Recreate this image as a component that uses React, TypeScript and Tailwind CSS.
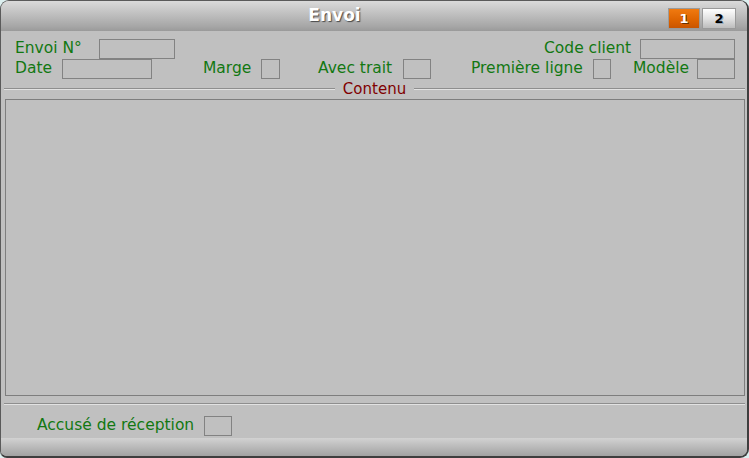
const font = { fontFamily: '"DejaVu Sans", Verdana, sans-serif' }

function Field({ w }: { w: string }) {
  return <div className={`h-[20px] border border-[#828282] shrink-0 ${w}`} />
}

function Label({ text, w }: { text: string; w: string }) {
  return (
    <div className={`h-[20px] flex items-center whitespace-nowrap text-[15.5px] text-[#127812] shrink-0 ${w}`}>
      {text}
    </div>
  )
}

export default function App() {
  return (
    <div className="w-[749px] h-[458px] bg-[#dcefef]" style={font}>
      <div className="w-[749px] h-[458px] flex flex-col overflow-hidden rounded-[9px] rounded-bl-[7px] border border-[#5a5a5a] border-r-2 border-b-2 border-r-[#3e3e3e] border-b-[#3e3e3e] bg-[#c0c0c0]">
        {/* title bar */}
        <div className="h-[30px] shrink-0 flex bg-[linear-gradient(to_bottom,#dadada,#a6a6a6_85%,#9a9a9a)]">
          <div className="flex-1 flex items-center justify-center">
            <span className="text-[17px] font-bold text-white [text-shadow:1px_1px_1px_#4a4a4a]">Envoi</span>
          </div>
          <div className="flex gap-[2px] pt-[7px] pr-[11px]">
            <div className="w-[32px] h-[21px] flex items-center justify-center border border-[#9a9a9a] bg-[linear-gradient(to_bottom,#f07a10,#dd6300_60%,#c95500)] text-[13px] font-bold text-white [text-shadow:1px_1px_0_#6a3000]">
              1
            </div>
            <div className="w-[34px] h-[21px] flex items-center justify-center border border-[#9a9a9a] bg-[linear-gradient(to_bottom,#ffffff,#e2e2e2_50%,#bdbdbd)] text-[13px] font-bold text-black [text-shadow:1px_1px_0_#9ab]">
              2
            </div>
          </div>
        </div>

        {/* header fields */}
        <div className="pt-[8px] pl-[14px] pr-[12px]">
          <div className="flex">
            <Label text="Envoi N°" w="w-[84px]" />
            <Field w="w-[76px]" />
            <div className="flex-1" />
            <Label text="Code client" w="w-[96px]" />
            <Field w="w-[95px]" />
          </div>
          <div className="flex">
            <Label text="Date" w="w-[47px]" />
            <Field w="w-[90px]" />
            <div className="w-[51px]" />
            <Label text="Marge" w="w-[58px]" />
            <Field w="w-[19px]" />
            <div className="w-[38px]" />
            <Label text="Avec trait" w="w-[85px]" />
            <Field w="w-[28px]" />
            <div className="w-[40px]" />
            <Label text="Première ligne" w="w-[122px]" />
            <Field w="w-[18px]" />
            <div className="w-[22px]" />
            <Label text="Modèle" w="w-[64px]" />
            <Field w="w-[38px]" />
          </div>
        </div>

        {/* Contenu separator */}
        <div className="h-[20px] flex items-center pl-[3px] pr-[2px]">
          <div className="flex-1 h-[2px] border-t border-b border-t-[#8e8e8e] border-b-[#e2e2e2]" />
          <span className="px-[8px] text-[15px] leading-none text-[#800000]">Contenu</span>
          <div className="flex-1 h-[2px] border-t border-b border-t-[#8e8e8e] border-b-[#e2e2e2]" />
        </div>

        {/* content box */}
        <div className="h-[297px] ml-[4px] mr-[2px] border border-[#7e7e7e] shrink-0" />

        <div className="h-[7px] shrink-0" />
        <div className="h-[2px] shrink-0 ml-[3px] mr-[2px] border-t border-b border-t-[#8e8e8e] border-b-[#e2e2e2]" />

        {/* bottom field */}
        <div className="pt-[11px] pl-[36px] flex">
          <Label text="Accusé de réception" w="w-[167px]" />
          <Field w="w-[28px]" />
        </div>

        <div className="flex-1" />
        {/* bottom bar */}
        <div className="h-[18px] shrink-0 bg-[linear-gradient(to_bottom,#d2d2d2,#bababa_50%,#a2a2a2)]" />
      </div>
    </div>
  )
}
